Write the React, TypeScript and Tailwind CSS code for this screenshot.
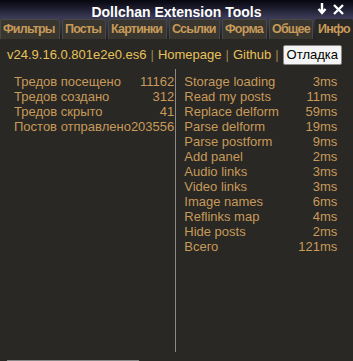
import React from 'react';

const tabs: [string, string][] = [
  ['Фильтры', 'w-[60px]'],
  ['Посты', 'w-[44px]'],
  ['Картинки', 'w-[59px]'],
  ['Ссылки', 'w-[51px]'],
  ['Форма', 'w-[45px]'],
  ['Общее', 'w-[44px]'],
  ['Инфо', 'flex-1'],
];

const stats: [string, string][] = [
  ['Тредов посещено', '11162'],
  ['Тредов создано', '312'],
  ['Тредов скрыто', '41'],
  ['Постов отправлено', '203556'],
];

const timings: [string, string][] = [
  ['Storage loading', '3ms'],
  ['Read my posts', '11ms'],
  ['Replace delform', '59ms'],
  ['Parse delform', '19ms'],
  ['Parse postform', '9ms'],
  ['Add panel', '2ms'],
  ['Audio links', '3ms'],
  ['Video links', '3ms'],
  ['Image names', '6ms'],
  ['Reflinks map', '4ms'],
  ['Hide posts', '2ms'],
  ['Всего', '121ms'],
];

const App: React.FC = () => {
  return (
    <div className="w-[353px] h-[361px] overflow-hidden bg-[#292824] font-['Liberation_Sans',Arial,sans-serif]">
      {/* Header */}
      <div className="relative h-[18px] bg-gradient-to-b from-[#07070f] to-[#3b3b58] text-center">
        <span className="text-white font-bold text-[14px] leading-[18px]">Dollchan Extension Tools</span>
        <div className="absolute right-[9px] top-[3px] flex items-center gap-[6px]">
          <svg width="10" height="12" viewBox="0 0 10 12">
            <path d="M5 0v9M1.5 6L5 10l3.5-4" stroke="#fff" strokeWidth="2.4" fill="none" />
          </svg>
          <svg width="11" height="11" viewBox="0 0 11 11">
            <path d="M1 1l9 9M10 1l-9 9" stroke="#fff" strokeWidth="2.4" />
          </svg>
        </div>
      </div>

      {/* Tabs */}
      <div className="flex gap-[2px] bg-gradient-to-b from-[#3b3b58] to-[#1f1f2a] pt-[1px]">
        {tabs.map(([t, w]) => (
          <div
            key={t}
            className={
              'pl-[2px] h-[20px] overflow-hidden whitespace-nowrap rounded-t-[3px] border border-b-0 text-[12.5px] tracking-[-0.8px] font-bold leading-[19px] text-[#c79a5a] ' +
              w +
              (t === 'Инфо' ? ' bg-[#292824] border-[#292824]' : ' bg-[#38362f] border-[#4a4840]')
            }
          >
            {t}
          </div>
        ))}
      </div>

      {/* Version line */}
      <div className="flex items-center px-[7px] pt-[6px] text-[13px] text-[#e8c25a]">
        <span>v24.9.16.0.801e2e0.es6</span>
        <span className="mx-[4px] text-[#a08050]">|</span>
        <span>Homepage</span>
        <span className="mx-[4px] text-[#a08050]">|</span>
        <span>Github</span>
        <span className="mx-[4px] text-[#a08050]">|</span>
        <button className="bg-[#f4f4f4] border border-[#888] rounded-[2px] px-[3px] h-[20px] text-[13px] text-black leading-[18px]">
          Отладка
        </button>
      </div>

      {/* Stats */}
      <div className="flex pt-[9px] pl-[14px] text-[13px] leading-[15px] text-[#c79a5a]">
        <table className="w-[160px] self-start border-collapse">
          <tbody>
            {stats.map(([k, v]) => (
              <tr key={k}>
                <td className="p-0 whitespace-nowrap">{k}</td>
                <td className="p-0 text-right">{v}</td>
              </tr>
            ))}
          </tbody>
        </table>
        <div className="w-px h-[283px] bg-[#8a8a8a] ml-[1px] mr-[2px] -mt-[5px]" />
        <table className="w-[153px] ml-[6px] self-start border-collapse">
          <tbody>
            {timings.map(([k, v]) => (
              <tr key={k}>
                <td className="p-0 whitespace-nowrap">{k}</td>
                <td className="p-0 text-right">{v}</td>
              </tr>
            ))}
          </tbody>
        </table>
      </div>

      {/* Partial textarea at bottom */}
      <div className="ml-[7px] mt-[8px] w-[132px] h-[8px] bg-white border-t border-x border-[#888]" />
    </div>
  );
};

export default App;
